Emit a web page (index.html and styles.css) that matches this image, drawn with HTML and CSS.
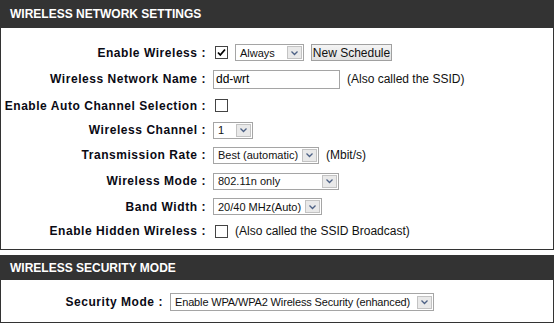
FILE: index.html
```html
<!DOCTYPE html>
<html>
<head>
<meta charset="utf-8">
<link rel="stylesheet" href="styles.css">
</head>
<body>
<div class="box box-main">
  <div class="hdr">WIRELESS NETWORK SETTINGS</div>
  <div class="body body-main">
    <div class="row r1">
      <div class="lbl">Enable Wireless :</div>
      <div class="ctl">
        <span class="cb"><svg width="11" height="11" viewBox="0 0 11 11"><path d="M2 5.5 L4.3 8 L9 2.5" fill="none" stroke="#000" stroke-width="1.8"/></svg></span>
        <span class="sel w-always"><span class="txt">Always</span><span class="arr"><svg width="9" height="6" viewBox="0 0 9 6"><path d="M1.5 1.5 L4.5 4.5 L7.5 1.5" fill="none" stroke="#4d6185" stroke-width="1.3"/></svg></span></span>
        <span class="btn">New Schedule</span>
      </div>
    </div>
    <div class="row r2">
      <div class="lbl">Wireless Network Name :</div>
      <div class="ctl">
        <span class="inp">dd-wrt</span>
        <span class="note">(Also called the SSID)</span>
      </div>
    </div>
    <div class="row r3">
      <div class="lbl">Enable Auto Channel Selection :</div>
      <div class="ctl"><span class="cb"></span></div>
    </div>
    <div class="row r4">
      <div class="lbl">Wireless Channel :</div>
      <div class="ctl">
        <span class="sel w-chan"><span class="txt">1</span><span class="arr"><svg width="9" height="6" viewBox="0 0 9 6"><path d="M1.5 1.5 L4.5 4.5 L7.5 1.5" fill="none" stroke="#4d6185" stroke-width="1.3"/></svg></span></span>
      </div>
    </div>
    <div class="row r5">
      <div class="lbl">Transmission Rate :</div>
      <div class="ctl">
        <span class="sel w-rate"><span class="txt">Best (automatic)</span><span class="arr"><svg width="9" height="6" viewBox="0 0 9 6"><path d="M1.5 1.5 L4.5 4.5 L7.5 1.5" fill="none" stroke="#4d6185" stroke-width="1.3"/></svg></span></span>
        <span class="note">(Mbit/s)</span>
      </div>
    </div>
    <div class="row r6">
      <div class="lbl">Wireless Mode :</div>
      <div class="ctl">
        <span class="sel w-mode"><span class="txt">802.11n only</span><span class="arr"><svg width="9" height="6" viewBox="0 0 9 6"><path d="M1.5 1.5 L4.5 4.5 L7.5 1.5" fill="none" stroke="#4d6185" stroke-width="1.3"/></svg></span></span>
      </div>
    </div>
    <div class="row r7">
      <div class="lbl">Band Width :</div>
      <div class="ctl">
        <span class="sel w-band"><span class="txt">20/40 MHz(Auto)</span><span class="arr"><svg width="9" height="6" viewBox="0 0 9 6"><path d="M1.5 1.5 L4.5 4.5 L7.5 1.5" fill="none" stroke="#4d6185" stroke-width="1.3"/></svg></span></span>
      </div>
    </div>
    <div class="row r8">
      <div class="lbl">Enable Hidden Wireless :</div>
      <div class="ctl">
        <span class="cb"></span>
        <span class="note">(Also called the SSID Broadcast)</span>
      </div>
    </div>
  </div>
</div>
<div class="box box-sec">
  <div class="hdr">WIRELESS SECURITY MODE</div>
  <div class="body body-sec">
    <div class="row r9">
      <div class="lbl lbl-sec">Security Mode :</div>
      <div class="ctl">
        <span class="sel w-sec"><span class="txt">Enable WPA/WPA2 Wireless Security (enhanced)</span><span class="arr"><svg width="9" height="6" viewBox="0 0 9 6"><path d="M1.5 1.5 L4.5 4.5 L7.5 1.5" fill="none" stroke="#4d6185" stroke-width="1.3"/></svg></span></span>
      </div>
    </div>
  </div>
</div>
</body>
</html>
```

FILE: styles.css
```css
* { box-sizing: border-box; }
html, body { margin: 0; padding: 0; background: #fff; }
body {
  font-family: "Liberation Sans", Arial, sans-serif;
  color: #000;
  width: 559px;
  height: 324px;
  overflow: hidden;
}
.box {
  width: 554px;
  border: 1px solid #333;
  border-top: none;
}
.box-sec { margin-top: 5px; }
.hdr {
  background: #333;
  color: #fff;
  font-weight: bold;
  font-size: 12px;
  height: 28px;
  line-height: 28px;
  padding-left: 10px;
  margin: 0 -1px;
}
.box-sec .hdr { height: 25px; line-height: 26px; }
.body-main { padding-top: 12px; height: 221px; }
.body-sec { padding-top: 12px; height: 42px; }
.row {
  display: flex;
  align-items: center;
  height: 25px;
}
.r2 { height: 28px; }
.r4 { height: 24px; }
.r5, .r6 { height: 26px; }
.r8 { height: 24px; }
.r9 { height: 20px; }
.lbl {
  width: 212px;
  text-align: right;
  font-weight: bold;
  font-size: 12px;
  letter-spacing: 0.55px;
  white-space: nowrap;
  padding-right: 7px;
  color: #0a0a14;
}
.lbl-sec { width: 169px; }
.ctl {
  display: flex;
  align-items: center;
  gap: 7px;
  font-size: 12px;
}
.cb {
  width: 13px;
  height: 13px;
  border: 1px solid #444;
  background: #fff;
  margin-left: 2px;
  display: inline-flex;
  align-items: center;
  justify-content: center;
}
.sel {
  display: inline-flex;
  align-items: center;
  justify-content: space-between;
  height: 17px;
  border: 1px solid #a5a5a5;
  background: #fff;
  font-size: 11px;
  color: #111;
  padding: 1px;
  overflow: hidden;
}
.sel .txt { padding-left: 3px; white-space: nowrap; }
.sel .arr {
  flex-shrink: 0;
  width: 15px;
  height: 13px;
  background: #e9e9e9;
  border: 1px solid #c3c3c3;
  display: inline-flex;
  align-items: center;
  justify-content: center;
}
.w-always { width: 69px; }
.w-chan { width: 40px; }
.w-rate { width: 106px; }
.w-mode { width: 126px; }
.w-band { width: 109px; }
.w-sec { width: 264px; height: 18px; }
.w-sec .txt { letter-spacing: -0.15px; }
.btn {
  display: inline-flex;
  align-items: center;
  justify-content: center;
  width: 81px;
  height: 17px;
  border: 1px solid #a0a0a0;
  background: linear-gradient(#f4f4f4, #e2e2e2);
  font-size: 12px;
  color: #111;
}
.inp {
  display: inline-flex;
  align-items: center;
  width: 127px;
  height: 19px;
  border: 1px solid #a5a5a5;
  padding-left: 2px;
  font-size: 12px;
}
.note { font-size: 12px; color: #111; }
```
